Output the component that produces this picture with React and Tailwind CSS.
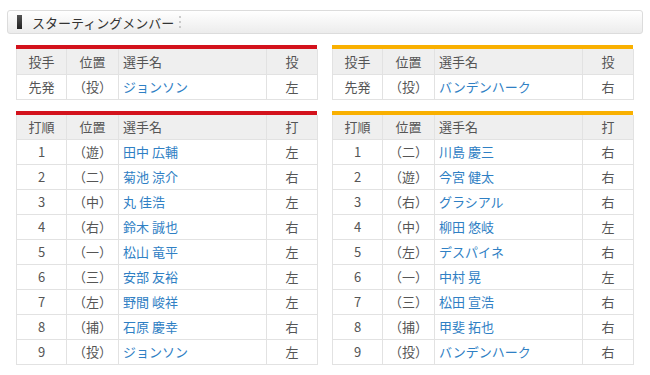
import React from "react";

const starters = {
  home: { pos: "(投)", name: "ジョンソン", hand: "左" },
  away: { pos: "(投)", name: "バンデンハーク", hand: "右" },
};

const lineups = {
  home: [
    ["1", "(遊)", "田中 広輔", "左"],
    ["2", "(二)", "菊池 涼介", "右"],
    ["3", "(中)", "丸 佳浩", "左"],
    ["4", "(右)", "鈴木 誠也", "右"],
    ["5", "(一)", "松山 竜平", "左"],
    ["6", "(三)", "安部 友裕", "左"],
    ["7", "(左)", "野間 峻祥", "左"],
    ["8", "(捕)", "石原 慶幸", "右"],
    ["9", "(投)", "ジョンソン", "左"],
  ],
  away: [
    ["1", "(二)", "川島 慶三", "右"],
    ["2", "(遊)", "今宮 健太", "右"],
    ["3", "(右)", "グラシアル", "右"],
    ["4", "(中)", "柳田 悠岐", "左"],
    ["5", "(左)", "デスパイネ", "右"],
    ["6", "(一)", "中村 晃", "左"],
    ["7", "(三)", "松田 宣浩", "右"],
    ["8", "(捕)", "甲斐 拓也", "右"],
    ["9", "(投)", "バンデンハーク", "右"],
  ],
};

const fmtPos = (p) => p.replace("(", "（").replace(")", "）");

function Table({ color, head, rows }) {
  return (
    <div className="w-[301px]">
      <div className={`h-[4px] ${color}`} />
      <table className="w-full border-collapse table-fixed text-[13px] text-[#555]">
        <colgroup>
          <col className="w-[50px]" />
          <col className="w-[52px]" />
          <col className="w-[148px]" />
          <col className="w-[51px]" />
        </colgroup>
        <thead>
          <tr className="h-[25px] bg-[#efefef]">
            <th className="border border-[#e2e2e2] border-t-0 font-normal text-center">{head[0]}</th>
            <th className="border border-[#e2e2e2] border-t-0 font-normal text-center">{head[1]}</th>
            <th className="border border-[#e2e2e2] border-t-0 font-normal text-left pl-[4px]">{head[2]}</th>
            <th className="border border-[#e2e2e2] border-t-0 font-normal text-center">{head[3]}</th>
          </tr>
        </thead>
        <tbody>
          {rows.map((r, i) => (
            <tr key={i} className="h-[25px] bg-white">
              <td className="border border-[#e2e2e2] text-center">{r[0]}</td>
              <td className="border border-[#e2e2e2] text-center">{fmtPos(r[1])}</td>
              <td className="border border-[#e2e2e2] pl-[4px]">
                <a className="text-[#2f80c4]">{r[2]}</a>
              </td>
              <td className="border border-[#e2e2e2] text-center">{r[3]}</td>
            </tr>
          ))}
        </tbody>
      </table>
    </div>
  );
}

export default function App() {
  return (
    <div
      className="w-[650px] h-[375px] bg-white pt-[10px] px-[7px]"
      style={{ fontFamily: '"Noto Sans CJK JP", "Liberation Sans", sans-serif' }}
    >
      {/* Heading bar */}
      <div className="h-[24px] w-[636px] rounded-[3px] border border-[#dcdcdc] bg-gradient-to-b from-white to-[#ececec] flex items-center">
        <span className="ml-[9px] w-[5px] h-[14px] bg-gradient-to-b from-[#555] to-[#222]" />
        <span className="ml-[10px] text-[13px] leading-none text-[#333]">スターティングメンバー</span>
        <span className="ml-[5px] flex flex-col gap-[3px]">
          <span className="w-[2px] h-[2px] rounded-full bg-[#bbb]" />
          <span className="w-[2px] h-[2px] rounded-full bg-[#bbb]" />
          <span className="w-[2px] h-[2px] rounded-full bg-[#bbb]" />
        </span>
      </div>

      <div className="mt-[11px] ml-[9px] flex gap-[15px]">
        <div className="flex flex-col gap-[11px]">
          <Table color="bg-[#d3121c]" head={["投手", "位置", "選手名", "投"]} rows={[["先発", starters.home.pos, starters.home.name, starters.home.hand]]} />
          <Table color="bg-[#d3121c]" head={["打順", "位置", "選手名", "打"]} rows={lineups.home} />
        </div>
        <div className="flex flex-col gap-[11px]">
          <Table color="bg-[#f9b000]" head={["投手", "位置", "選手名", "投"]} rows={[["先発", starters.away.pos, starters.away.name, starters.away.hand]]} />
          <Table color="bg-[#f9b000]" head={["打順", "位置", "選手名", "打"]} rows={lineups.away} />
        </div>
      </div>
    </div>
  );
}
